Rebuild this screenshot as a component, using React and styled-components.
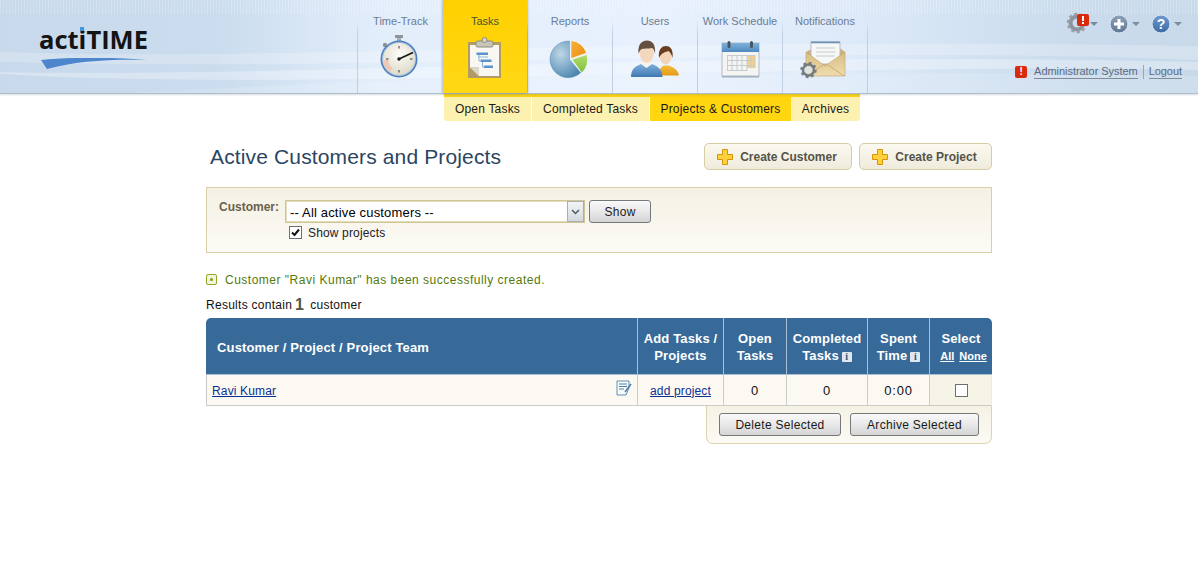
import React from 'react';
import styled, { createGlobalStyle } from 'styled-components';

const GlobalStyle = createGlobalStyle`
  html, body { margin: 0; padding: 0; background: #fff; }
  body { font-family: "Liberation Sans", Arial, sans-serif; font-size: 12px; color: #000; }
`;

const Header = styled.header`
  position: relative;
  display: flex;
  height: 94px;
  box-sizing: border-box;
  border-bottom: 1px solid #aebccc;
  background: linear-gradient(90deg, #c7d9ea 0%, #cadcee 18%, #e3eefb 32%, #e8f1fd 55%, #dce9f8 72%, #c9dbec 90%, #c8d9ea 100%);
  box-shadow: 0 1px 2px rgba(90, 110, 130, 0.25);

  &:before {
    content: '';
    position: absolute;
    top: 0;
    left: 0;
    right: 0;
    height: 14px;
    background: repeating-linear-gradient(90deg, rgba(255, 255, 255, 0.22) 0 1px, rgba(255, 255, 255, 0) 1px 3px);
  }
`;

const Waves = styled.svg`
  position: absolute;
  top: 0;
  left: 0;
  width: 100%;
  height: 93px;
`;

const LogoArea = styled.div`
  position: relative;
  width: 357px;
  flex: none;
  padding: 22px 0 0 39px;
  box-sizing: border-box;
`;

const LogoText = styled.div`
  font-family: "Open Sans", sans-serif;
  font-weight: 700;
  font-size: 25.5px;
  line-height: 34px;
  color: #141414;
  span { position: relative; }
  span i {
    position: absolute;
    top: 5px;
    left: 1px;
    width: 4px;
    height: 4px;
    background: #3d97dc;
  }
`;

const Swoosh = styled.svg`
  display: block;
  margin: 2px 0 0 2px;
`;

const Nav = styled.nav`
  position: relative;
  display: flex;
  flex: none;
  height: 93px;
`;

const NavTab = styled.div`
  width: ${p => (p.$active ? 84 : 85)}px;
  height: 93px;
  box-sizing: border-box;
  display: flex;
  flex-direction: column;
  align-items: center;
  padding-top: 15px;
  font-size: 11px;
  line-height: 13px;
  white-space: nowrap;
  color: ${p => (p.$active ? '#46572f' : '#6a7c96')};
  background: ${p => (p.$active ? 'linear-gradient(#ffd000, #ffd815)' : 'transparent')};
  box-shadow: ${p => (p.$active ? '1px 0 2px rgba(80,90,110,.35), -1px 0 2px rgba(80,90,110,.35)' : 'none')};
  z-index: ${p => (p.$active ? 1 : 0)};
  border-left: ${p => (p.$active ? 'none' : '1px solid')};
  ${p => (p.$active ? '' : 'border-image: linear-gradient(rgba(195, 210, 227, 0) 22%, #c0d0e2 38%) 1;')}
  &:first-child { width: 86px; }
  &:last-child { border-right: 1px solid; width: 86px; }
`;

const NavIcon = styled.svg`
  display: block;
  margin-top: 5px;
  width: 54px;
  height: 48px;
  flex: none;
`;

const UserArea = styled.div`
  position: relative;
  flex: 1;
  display: flex;
  flex-direction: column;
  align-items: flex-end;
  padding: 12px 16px 0 0;
`;

const ToolRow = styled.div`
  display: flex;
  align-items: center;
  height: 24px;
`;

const Tool = styled.div`
  display: flex;
  align-items: center;
  margin-left: ${p => p.$gap || 0}px;
`;

const Caret = styled.span`
  display: block;
  width: 0;
  height: 0;
  margin-left: ${p => p.$gap ?? 3}px;
  border-left: 4px solid transparent;
  border-right: 4px solid transparent;
  border-top: 4px solid #7d8ca0;
`;

const UserRow = styled.div`
  display: flex;
  align-items: center;
  margin-top: 27px;
  height: 18px;
  font-size: 11px;
  letter-spacing: -0.05px;
  color: #5d6b7e;
`;

const AlertBadge = styled.span`
  display: flex;
  align-items: center;
  justify-content: center;
  width: 12px;
  height: 12px;
  margin-right: 7px;
  border-radius: 2px;
  background: #d92b0b;
  color: #fff;
  font-size: 10px;
  font-weight: 700;
  line-height: 12px;
`;

const UserLink = styled.a`
  color: #5d6b7e;
  border-bottom: 1px solid #7f8b9a;
  line-height: 13px;
`;

const UserDivider = styled.span`
  width: 1px;
  height: 14px;
  margin: 0 5px;
  background: #a6a88e;
`;

const SubNav = styled.div`
  display: flex;
  width: 416px;
  margin-left: 444px;
  border-top: 3px solid #ffd40f;
  border-radius: 0 0 3px 3px;
  overflow: hidden;
  height: 24px;
`;

const SubNavItem = styled.div`
  width: ${p => p.$w}px;
  margin-right: ${p => p.$gap || 0}px;
  display: flex;
  align-items: center;
  justify-content: center;
  font-size: 12px;
  letter-spacing: 0.2px;
  color: #1a1a1a;
  background: ${p => (p.$active ? '#ffd60f' : '#fdf1b0')};
`;

const Main = styled.main`
  width: 786px;
  margin: 22px auto 0;
`;

const TitleRow = styled.div`
  display: flex;
  align-items: center;
  height: 27px;
`;

const Title = styled.h1`
  flex: 1;
  margin: 0 0 0 4px;
  font-size: 21px;
  letter-spacing: 0.14px;
  font-weight: 400;
  color: #2c4560;
`;

const CreateButton = styled.button`
  display: flex;
  align-items: center;
  justify-content: center;
  gap: 7px;
  width: ${p => p.$w}px;
  height: 27px;
  margin-left: 7px;
  padding: 0 2px 0 0;
  border: 1px solid #d6cda2;
  border-radius: 5px;
  background: linear-gradient(#fbf9f0, #efebdc);
  font-family: inherit;
  font-size: 12px;
  font-weight: 700;
  color: #55534a;
`;

const FilterBox = styled.section`
  display: flex;
  height: 66px;
  margin-top: 17px;
  box-sizing: border-box;
  border: 1px solid #d8cfa6;
  background: linear-gradient(#f4f0e3, #fcfbf6);
  padding: 12px 0 0 12px;
`;

const FilterLabel = styled.label`
  width: 66px;
  font-size: 12px;
  font-weight: 700;
  line-height: 14px;
  color: #6b614c;
`;

const FilterControls = styled.div`
  display: flex;
  flex-direction: column;
`;

const SelectRow = styled.div`
  display: flex;
  gap: 4px;
`;

const SelectWrap = styled.div`
  position: relative;
  width: 300px;
  height: 23px;
`;

const Select = styled.select`
  appearance: none;
  width: 100%;
  height: 100%;
  box-sizing: border-box;
  padding: 1px 0 0 4px;
  border: 1px solid #cfc596;
  outline: 1px solid #e3dcb9;
  outline-offset: -2px;
  background: #fff;
  font-family: inherit;
  font-size: 13px;
  letter-spacing: 0.17px;
  color: #000;
`;

const SelectArrow = styled.span`
  position: absolute;
  top: 1px;
  right: 1px;
  width: 17px;
  height: 21px;
  box-sizing: border-box;
  border: 1px solid #a9aeb5;
  background: linear-gradient(#f2f4f6, #d5d9de);
  display: flex;
  align-items: center;
  justify-content: center;
  pointer-events: none;
`;

const GreyButton = styled.button`
  width: ${p => p.$w}px;
  height: 23px;
  padding: 0;
  border: 1px solid #77787a;
  border-radius: 3px;
  background: linear-gradient(#fafafa, #e6e6e6 55%, #d5d5d5);
  font-family: inherit;
  font-size: 12px;
  letter-spacing: 0.3px;
  color: #1a1a1a;
`;

const CheckRow = styled.div`
  display: flex;
  align-items: center;
  margin: 2px 0 0 4px;
  height: 15px;
  font-size: 12px;
  letter-spacing: 0.15px;
  color: #222;
`;

const Check = styled.span`
  display: flex;
  align-items: center;
  justify-content: center;
  width: 13px;
  height: 13px;
  box-sizing: border-box;
  margin: ${p => p.$margin || '0'};
  border: 1px solid #6f6f6f;
  background: #fff;
`;

const Message = styled.div`
  display: flex;
  align-items: center;
  margin-top: 19px;
  height: 15px;
  font-size: 12px;
  letter-spacing: 0.5px;
  color: #55790a;
`;

const MessageIcon = styled.span`
  display: flex;
  align-items: center;
  justify-content: center;
  width: 11px;
  height: 11px;
  margin-right: 8px;
  box-sizing: border-box;
  border: 1px solid #8fa52b;
  border-radius: 2px;
  background: #f4f6dc;
  &:after {
    content: '';
    width: 3px;
    height: 3px;
    border-radius: 50%;
    background: #7b9a1b;
  }
`;

const Results = styled.div`
  display: flex;
  align-items: center;
  margin-top: 9px;
  height: 18px;
  font-size: 12px;
  letter-spacing: 0.27px;
  color: #111;
  b {
    margin: 0 6px 0 3px;
    font-size: 16px;
    color: #51564a;
  }
`;

const Table = styled.table`
  width: 786px;
  margin-top: 4px;
  border-collapse: separate;
  border-spacing: 0;
  table-layout: fixed;
`;

const HeadCell = styled.th`
  height: 57px;
  box-sizing: border-box;
  padding: 2px 0 0 ${p => (p.$left ? 11 : 0)}px;
  background: #376a98;
  color: #fff;
  font-size: 13px;
  font-weight: 700;
  letter-spacing: 0.15px;
  line-height: 17px;
  text-align: ${p => (p.$left ? 'left' : 'center')};
  border-left: ${p => (p.$first ? 'none' : '1px solid #a9bfd3')};
  border-bottom: 1px solid #a9bfd3;
  &:first-child { border-top-left-radius: 5px; }
  &:last-child { border-top-right-radius: 5px; }
`;

const InfoMark = styled.span`
  display: inline-block;
  width: 10px;
  height: 10px;
  margin-left: 3px;
  border-radius: 1px;
  background: #dfe7ef;
  color: #2f5578;
  font-family: "Liberation Serif", serif;
  font-size: 10px;
  font-weight: 700;
  line-height: 10px;
  text-align: center;
`;

const SelectLinks = styled.div`
  display: flex;
  justify-content: center;
  gap: 5px;
  margin: 2px 0;
  padding-left: 5px;
  font-size: 11px;
  letter-spacing: 0;
  line-height: 14px;
  a { color: #fff; text-decoration: underline; }
`;

const BodyCell = styled.td`
  height: 31px;
  box-sizing: border-box;
  padding: 0;
  background: ${p => (p.$tint ? '#f6f3e7' : '#fcf9f2')};
  border-left: 1px solid #cbcbc8;
  border-bottom: 1px solid #cbcbc8;
  font-size: 13px;
  text-align: center;
  color: #111;
  letter-spacing: 0.8px;
  &:last-child { border-right: 1px solid #f1eddd; }
`;

const CustomerCell = styled.div`
  display: flex;
  align-items: center;
  justify-content: space-between;
  padding: 2px 4px 0 5px;
  font-size: 12px;
`;

const DataLink = styled.a`
  color: #0b2f94;
  font-size: 12px;
  letter-spacing: 0.15px;
  text-decoration: underline;
`;

const ActionRow = styled.div`
  display: flex;
  justify-content: flex-end;
`;

const ActionBox = styled.div`
  display: flex;
  gap: 9px;
  justify-content: flex-end;
  width: 286px;
  height: 38px;
  box-sizing: border-box;
  padding: 7px 12px 0 0;
  border: 1px solid #dcd4b0;
  border-top: none;
  border-radius: 0 0 7px 7px;
  background: linear-gradient(#f5f2e5, #fbfaf4);
  button { padding-top: 1px; }
`;

const EditGlyph = styled.svg`
  display: block;
  margin-bottom: 5px;
`;

const ClockIcon = () => (
  <NavIcon viewBox="0 0 54 48">
    <defs>
      <radialGradient id="clockFace" cx="50%" cy="35%" r="70%">
        <stop offset="0" stopColor="#fcfbf6" />
        <stop offset="1" stopColor="#dcd8c8" />
      </radialGradient>
    </defs>
    <rect x="21" y="2" width="8" height="3" fill="#8f959b" />
    <rect x="23" y="5" width="4" height="3" fill="#a9adb2" />
    <circle cx="11" cy="12" r="2.2" fill="#8c9296" />
    <circle cx="25" cy="26" r="18.500" fill="#4a7fc0" />
    <circle cx="25" cy="26" r="17" fill="#a9c0d8" />
    <circle cx="25" cy="26" r="16" fill="url(#clockFace)" />
    <path d="M9.500 27a15.500 15.500 0 0 0 6 12l3-4a10 10 0 0 1-4-8z" fill="#f0c9b6" />
    <path d="M25 13v2.500M25 37v2.500M12 26h2.500M36 26h2.500" stroke="#333" strokeWidth="1" />
    <path d="M25 26l14-6.500" stroke="#1a1a1a" strokeWidth="1.800" />
    <circle cx="25" cy="26" r="1.700" fill="#1a1a1a" />
  </NavIcon>
);

const ClipboardIcon = () => (
  <NavIcon viewBox="0 0 54 48">
    <rect x="10" y="9" width="33" height="36" fill="#b09a66" />
    <path d="M12 12h29v31H21l-9-9z" fill="#f8f7f2" />
    <path d="M12 34h9v9z" fill="#dbd7c8" />
    <rect x="18" y="8" width="17" height="6" rx="1.500" fill="#c8c6b8" stroke="#8c8a7c" />
    <circle cx="26.500" cy="7" r="2.500" fill="#d8d6cc" stroke="#8c8a7c" />
    <g fill="#5b93cf">
      <rect x="18.500" y="19.500" width="11.500" height="2.500" />
      <rect x="22.500" y="26.500" width="11" height="2.500" />
      <rect x="26" y="32.500" width="9" height="2.500" />
    </g>
    <path d="M21 22v6h1.500M24.500 29v5h1.500M20 24h10" fill="none" stroke="#8fb5dc" />
  </NavIcon>
);

const PieIcon = () => (
  <NavIcon viewBox="0 0 54 48">
    <defs>
      <radialGradient id="pieBlue" cx="35%" cy="35%" r="75%">
        <stop offset="0" stopColor="#bfd6e6" />
        <stop offset="1" stopColor="#4a86b0" />
      </radialGradient>
      <linearGradient id="pieOrange" x1="0" y1="0" x2="1" y2="1">
        <stop offset="0" stopColor="#f8b23a" />
        <stop offset="1" stopColor="#ea8a10" />
      </linearGradient>
      <linearGradient id="pieGreen" x1="0" y1="0" x2="0" y2="1">
        <stop offset="0" stopColor="#b5dc6a" />
        <stop offset="1" stopColor="#7cc040" />
      </linearGradient>
    </defs>
    <path d="M26.500 8.100a18.300 18.300 0 1 0 11.300 31.600L26.500 26.500z" fill="url(#pieBlue)" stroke="#5d8fb3" strokeWidth=".5" />
    <path d="M28 7.500a18 18 0 0 1 15.500 12.500L28 25.500z" fill="url(#pieOrange)" stroke="#fff" strokeWidth=".5" />
    <path d="M29 26.500l14.800-5a18 18 0 0 1-5 18.500z" fill="url(#pieGreen)" stroke="#fff" strokeWidth=".5" />
  </NavIcon>
);

const UsersIcon = () => (
  <NavIcon viewBox="0 0 54 48">
    <defs>
      <linearGradient id="manBody" x1="0" y1="0" x2="0" y2="1">
        <stop offset="0" stopColor="#7fb0dc" />
        <stop offset="1" stopColor="#3f78b0" />
      </linearGradient>
      <linearGradient id="womanBody" x1="0" y1="0" x2="0" y2="1">
        <stop offset="0" stopColor="#f5bd3f" />
        <stop offset="1" stopColor="#e39a16" />
      </linearGradient>
    </defs>
    <path d="M30 42.500c1-6 3-8.500 6-10h4.500c4 1.500 9 3 10.500 10z" fill="url(#womanBody)" />
    <ellipse cx="37.700" cy="23" rx="6" ry="8.500" fill="#f3d4ba" />
    <path d="M31 25c-1-9 3-12 7-12s7.500 3 6.500 12c-1-4-2.500-6-4-7-3 1-7.500 2-9.500 7z" fill="#6a3d1e" />
    <path d="M3 44c0-8 4-10.500 10-13h11c6 2.500 10 5 10.500 13z" fill="url(#manBody)" />
    <path d="M13 31l5.500 4 5.500-4-1.500-3h-8z" fill="#f7f4ee" />
    <ellipse cx="18.700" cy="20" rx="7" ry="10" fill="#f4d7bf" />
    <path d="M10.500 21c-1-10 3.500-13.500 8.500-13.500s9 3.500 8 13.500c-.5-3.500-1.500-5-3-6-4 1-9 0-11 1.500-1 1-2 2.500-2.500 4.500z" fill="#66503f" />
  </NavIcon>
);

const CalendarIcon = () => (
  <NavIcon viewBox="0 0 54 48">
    <defs>
      <linearGradient id="calHead" x1="0" y1="0" x2="0" y2="1">
        <stop offset="0" stopColor="#7fb2dc" />
        <stop offset="1" stopColor="#4f89bf" />
      </linearGradient>
    </defs>
    <rect x="9" y="10" width="37" height="33" fill="#f4f5f3" stroke="#b3bac1" />
    <rect x="9" y="10" width="37" height="9" fill="url(#calHead)" />
    <rect x="14.500" y="8" width="3" height="7" rx="1.500" fill="#4a5560" />
    <rect x="37" y="8" width="3" height="7" rx="1.500" fill="#4a5560" />
    <rect x="34" y="22" width="8" height="13" fill="#f6cf83" />
    <g fill="none" stroke="#c6cbd0" strokeWidth="1">
      <path d="M14 22.500h28M14 27.500h28M14 32.500h28M14 37.500h20" />
      <path d="M14.500 22v16M19 22v16M24 22v16M29 22v16M34 22v16M38 22v13M42 22v13" />
    </g>
    <rect x="9" y="43" width="37" height="1.500" fill="#9fb0c0" />
  </NavIcon>
);

const MailIcon = () => (
  <NavIcon viewBox="0 0 54 48">
    <defs>
      <linearGradient id="mailBack" x1="0" y1="0" x2="0" y2="1">
        <stop offset="0" stopColor="#d7bd82" />
        <stop offset="1" stopColor="#efdcae" />
      </linearGradient>
    </defs>
    <path d="M8 19l20-10h6l13 10v24H8z" fill="#cdb074" />
    <rect x="13" y="9" width="29" height="22" fill="#f6f7f7" stroke="#b5c0ca" />
    <rect x="13" y="8.500" width="29" height="1.800" fill="#6e94b6" />
    <path d="M18 15h19M18 19h19M18 23h19" stroke="#c6cacd" />
    <path d="M8 19l19 14 20-14v24H8z" fill="url(#mailBack)" stroke="#bca36b" strokeWidth=".6" />
    <path d="M9 43l17-12M46 43L29 31" stroke="#c9ae72" fill="none" />
    <circle cx="10.500" cy="37" r="5.500" fill="none" stroke="#737c84" strokeWidth="2.500" />
    <circle cx="10.500" cy="37" r="7" fill="none" stroke="#737c84" strokeWidth="2.500" strokeDasharray="2.700 2.800" />
    <circle cx="10.500" cy="37" r="3.500" fill="#dfe3e6" />
  </NavIcon>
);

const GearTool = () => (
  <svg width="28" height="24" viewBox="0 0 28 24">
    <circle cx="16" cy="11" r="6.500" fill="none" stroke="#8d949b" strokeWidth="4" />
    <circle cx="16" cy="11" r="9" fill="none" stroke="#9aa1a8" strokeWidth="2.500" strokeDasharray="3.200 2.400" />
    <rect x="16" y="2" width="12" height="12" rx="2" fill="#d92b0b" />
    <rect x="21" y="4" width="2" height="5" fill="#fff" />
    <rect x="21" y="10" width="2" height="2" fill="#fff" />
  </svg>
);

const RoundTool = ({ id, from, to, children }) => (
  <svg width="20" height="20" viewBox="0 0 20 20">
    <defs>
      <linearGradient id={id} x1="0" y1="0" x2="0" y2="1">
        <stop offset="0" stopColor={from} />
        <stop offset="1" stopColor={to} />
      </linearGradient>
    </defs>
    <circle cx="10" cy="10" r="9" fill={`url(#${id})`} stroke="#dbe4ee" strokeWidth="1" />
    {children}
  </svg>
);

const PlusIcon = () => (
  <svg width="16" height="16" viewBox="0 0 16 16">
    <path d="M5.500 .5h5v5h5v5h-5v5h-5v-5h-5v-5h5z" fill="#ffcf3c" stroke="#d69408" strokeWidth="1" />
  </svg>
);

const EditIcon = () => (
  <EditGlyph width="17" height="17" viewBox="0 0 17 17">
    <path d="M1 1h12v7l-3 7H1z" fill="#f9fbfc" stroke="#5f8fb5" strokeWidth="1" />
    <path d="M3 4h8M3 6.500h8M3 9h5" stroke="#4f80a6" strokeWidth="1" />
    <path d="M9 12l6-8" stroke="#4f80a6" strokeWidth="1.600" />
  </EditGlyph>
);

const navItems = [
  { label: 'Time-Track', icon: <ClockIcon /> },
  { label: 'Tasks', icon: <ClipboardIcon />, active: true },
  { label: 'Reports', icon: <PieIcon /> },
  { label: 'Users', icon: <UsersIcon /> },
  { label: 'Work Schedule', icon: <CalendarIcon /> },
  { label: 'Notifications', icon: <MailIcon /> },
];

const subItems = [
  { label: 'Open Tasks', w: 87, gap: 1 },
  { label: 'Completed Tasks', w: 117, gap: 1 },
  { label: 'Projects & Customers', w: 141, active: true },
  { label: 'Archives', w: 69 },
];

const columns = [431, 86, 63, 81, 62, 63];

export default function App() {
  return (
    <>
      <GlobalStyle />
      <Header>
        <Waves viewBox="0 0 1198 93" preserveAspectRatio="none">
          <path d="M0 52C300 62 600 36 1198 46V60C800 44 400 72 0 62z" fill="#fff" opacity=".22" />
          <path d="M0 72C300 78 700 50 1198 62V70C800 62 300 92 0 74z" fill="#fff" opacity=".3" />
          <path d="M130 93C500 72 800 70 1198 76V93z" fill="#fff" opacity=".14" />
        </Waves>
        <LogoArea>
          <LogoText>act<span>i<i /></span>TIME</LogoText>
          <Swoosh width="106" height="11" viewBox="0 0 106 11">
            <path d="M0 2C30-1 70-1 106 2 70 1 35 3 6 11z" fill="#4d86cc" />
          </Swoosh>
        </LogoArea>
        <Nav>
          {navItems.map(item => (
            <NavTab key={item.label} $active={item.active}>
              {item.label}
              {item.icon}
            </NavTab>
          ))}
        </Nav>
        <UserArea>
          <ToolRow>
            <Tool>
              <GearTool />
              <Caret $gap={1} />
            </Tool>
            <Tool $gap={11}>
              <RoundTool id="plusFill" from="#8ea3ba" to="#5f7894">
                <path d="M8.500 5h3v3.500H15v3h-3.500V15h-3v-3.500H5v-3h3.500z" fill="#fff" />
              </RoundTool>
              <Caret />
            </Tool>
            <Tool $gap={11}>
              <RoundTool id="helpFill" from="#6f9bd0" to="#3a6aa8">
                <text x="10" y="15" textAnchor="middle" fontSize="14" fontWeight="700" fontFamily="Liberation Sans" fill="#fff">?</text>
              </RoundTool>
              <Caret />
            </Tool>
          </ToolRow>
          <UserRow>
            <AlertBadge>!</AlertBadge>
            <UserLink>Administrator System</UserLink>
            <UserDivider />
            <UserLink>Logout</UserLink>
          </UserRow>
        </UserArea>
      </Header>
      <SubNav>
        {subItems.map(item => (
          <SubNavItem key={item.label} $w={item.w} $gap={item.gap} $active={item.active}>
            {item.label}
          </SubNavItem>
        ))}
      </SubNav>
      <Main>
        <TitleRow>
          <Title>Active Customers and Projects</Title>
          <CreateButton $w={148}><PlusIcon />Create Customer</CreateButton>
          <CreateButton $w={133}><PlusIcon />Create Project</CreateButton>
        </TitleRow>
        <FilterBox>
          <FilterLabel>Customer:</FilterLabel>
          <FilterControls>
            <SelectRow>
              <SelectWrap>
                <Select defaultValue="all">
                  <option value="all">-- All active customers --</option>
                </Select>
                <SelectArrow>
                  <svg width="9" height="6" viewBox="0 0 9 6">
                    <path d="M1 1l3.500 3.500L8 1" fill="none" stroke="#4f5965" strokeWidth="1.500" />
                  </svg>
                </SelectArrow>
              </SelectWrap>
              <GreyButton $w={62}>Show</GreyButton>
            </SelectRow>
            <CheckRow>
              <Check $margin="0 6px 0 0">
                <svg width="11" height="11" viewBox="0 0 11 11">
                  <path d="M2 5.500l2.500 2.500L9 2.500" fill="none" stroke="#111" strokeWidth="2" />
                </svg>
              </Check>
              Show projects
            </CheckRow>
          </FilterControls>
        </FilterBox>
        <Message>
          <MessageIcon />
          Customer "Ravi Kumar" has been successfully created.
        </Message>
        <Results>Results contain <b>1</b> customer</Results>
        <Table>
          <colgroup>
            {columns.map((w, i) => <col key={i} style={{ width: w }} />)}
          </colgroup>
          <thead>
            <tr>
              <HeadCell $left $first>Customer / Project / Project Team</HeadCell>
              <HeadCell>Add Tasks /<br />Projects</HeadCell>
              <HeadCell>Open<br />Tasks</HeadCell>
              <HeadCell>Completed<br />Tasks<InfoMark>i</InfoMark></HeadCell>
              <HeadCell>Spent<br />Time<InfoMark>i</InfoMark></HeadCell>
              <HeadCell>
                Select
                <SelectLinks><a>All</a><a>None</a></SelectLinks>
              </HeadCell>
            </tr>
          </thead>
          <tbody>
            <tr>
              <BodyCell>
                <CustomerCell>
                  <DataLink>Ravi Kumar</DataLink>
                  <EditIcon />
                </CustomerCell>
              </BodyCell>
              <BodyCell><DataLink>add project</DataLink></BodyCell>
              <BodyCell>0</BodyCell>
              <BodyCell>0</BodyCell>
              <BodyCell>0:00</BodyCell>
              <BodyCell $tint>
                <Check $margin="0 0 0 25px" />
              </BodyCell>
            </tr>
          </tbody>
        </Table>
        <ActionRow>
          <ActionBox>
            <GreyButton $w={122}>Delete Selected</GreyButton>
            <GreyButton $w={129}>Archive Selected</GreyButton>
          </ActionBox>
        </ActionRow>
      </Main>
    </>
  );
}
